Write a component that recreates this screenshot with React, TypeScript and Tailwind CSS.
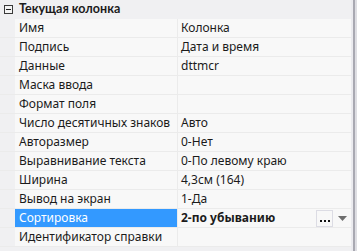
const rows: { name: string; value: string; selected?: boolean }[] = [
  { name: "Имя", value: "Колонка" },
  { name: "Подпись", value: "Дата и время" },
  { name: "Данные", value: "dttmcr" },
  { name: "Маска ввода", value: "" },
  { name: "Формат поля", value: "" },
  { name: "Число десятичных знаков", value: "Авто" },
  { name: "Авторазмер", value: "0-Нет" },
  { name: "Выравнивание текста", value: "0-По левому краю" },
  { name: "Ширина", value: "4,3см (164)" },
  { name: "Вывод на экран", value: "1-Да" },
  { name: "Сортировка", value: "2-по убыванию", selected: true },
  { name: "Идентификатор справки", value: "" },
];

export default function App() {
  return (
    <div
      className="w-[357px] h-[251px] bg-[#f0f0f2] flex text-[12px] text-[#1b1b1b] overflow-hidden"
      style={{ fontFamily: '"Noto Sans", "Open Sans", sans-serif' }}
    >
      <div className="w-[351px] flex flex-col">
        {/* Category header */}
        <div className="h-[19px] flex items-center">
          <div className="w-[15px] flex justify-center pl-[1px]">
            <span className="w-[9px] h-[9px] border border-[#3a3a3a] flex items-center justify-center bg-[#f4f4f4]">
              <span className="w-[5px] h-[1px] bg-[#222]" />
            </span>
          </div>
          <span className="pl-[4px] font-bold leading-none text-[12.5px] font-['Lato',sans-serif]">Текущая колонка</span>
        </div>

        {/* Properties */}
        {rows.map((r) => (
          <div key={r.name} className="h-[19px] flex border-b border-[#ebebeb]">
            <div className="w-[15px] shrink-0" />
            <div
              className={
                r.selected
                  ? "w-[162px] shrink-0 bg-[#3399ff] text-white pl-[4px] flex items-center leading-none"
                  : "w-[162px] shrink-0 bg-[#f8f8f8] pl-[4px] flex items-center leading-none"
              }
            >
              {r.name}
            </div>
            <div className="w-[1px] bg-[#ebebeb]" />
            <div className="flex-1 bg-[#f8f8f8] pl-[3px] flex items-center leading-none">
              <span className={r.selected ? "font-bold flex-1" : "flex-1"}>{r.value}</span>
              {r.selected && (
                <div className="flex items-center h-full">
                  <span className="w-[17px] h-[17px] border border-[#dcdce4] bg-[#f8f8f8] flex items-end justify-center pb-[4px] gap-[2px]">
                    <span className="w-[2px] h-[2px] bg-[#111]" />
                    <span className="w-[2px] h-[2px] bg-[#111]" />
                    <span className="w-[2px] h-[2px] bg-[#111]" />
                  </span>
                  <span className="w-[18px] flex justify-center">
                    <svg width="9" height="5" viewBox="0 0 9 5">
                      <path d="M0 0 H9 L4.5 5 Z" fill="#6e6e6e" />
                    </svg>
                  </span>
                </div>
              )}
            </div>
          </div>
        ))}
        <div className="flex-1" />
      </div>
      <div className="w-[2px] bg-[#ebebef]" />
      <div className="w-[2px] bg-[#a9a9b2]" />
      <div className="flex-1 bg-[#dedee3]" />
    </div>
  );
}
